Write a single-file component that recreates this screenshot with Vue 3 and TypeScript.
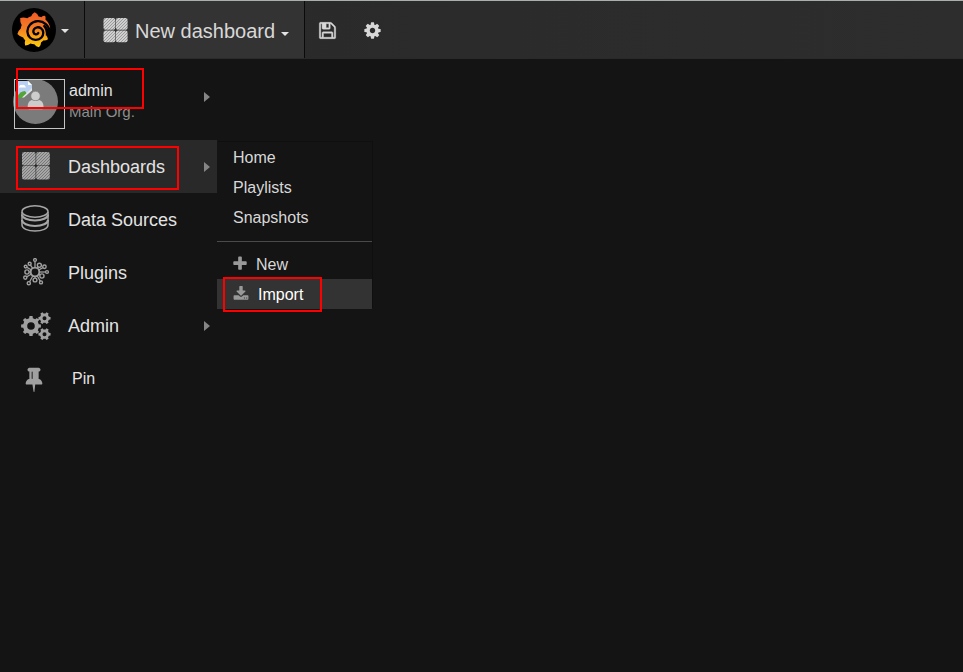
<script setup lang="ts">
interface MenuItem {
  label: string
  icon: 'dashboards' | 'database' | 'plugins' | 'cogs'
  open?: boolean
  arrow?: boolean
}

const menu: MenuItem[] = [
  { label: 'Dashboards', icon: 'dashboards', open: true, arrow: true },
  { label: 'Data Sources', icon: 'database' },
  { label: 'Plugins', icon: 'plugins' },
  { label: 'Admin', icon: 'cogs', arrow: true },
]

const pages: string[] = ['Home', 'Playlists', 'Snapshots']

// Outline of a toothed wheel with a round hole, filled with the even-odd rule.
function gear(cx: number, cy: number, teeth: number, outer: number, inner: number, hole: number): string {
  const step = (Math.PI * 2) / teeth
  const points: string[] = []
  for (let i = 0; i < teeth; i++) {
    const a = i * step
    const corners: [number, number][] = [[-0.3, inner], [-0.2, outer], [0.2, outer], [0.3, inner]]
    for (const [f, r] of corners) {
      points.push(`${(cx + r * Math.cos(a + f * step)).toFixed(2)} ${(cy + r * Math.sin(a + f * step)).toFixed(2)}`)
    }
  }
  return `M${points.join('L')}ZM${cx - hole} ${cy}a${hole} ${hole} 0 1 0 ${hole * 2} 0a${hole} ${hole} 0 1 0 ${-hole * 2} 0Z`
}

const cogsPath = [
  gear(10, 15, 8, 10, 8, 3.8),
  gear(23.5, 7.2, 6, 6.2, 4.7, 2),
  gear(23.5, 23.2, 6, 6.2, 4.7, 2),
].join('')

interface Spoke { x1: number; y1: number; x2: number; y2: number; r: number }

const spokes: Spoke[] = [
  [-90, 12, 1.4], [-57, 8, 2], [-29, 10.8, 1.7], [0, 12, 1.4], [30, 8, 2.1],
  [60, 12, 1.5], [90, 8, 1.9], [119, 12.8, 1.6], [150, 11.2, 1.6], [180, 8, 2.1],
  [210, 10.8, 1.4], [237, 9.8, 1.5],
].map(([deg, len, r]) => {
  const a = (deg * Math.PI) / 180
  return {
    x1: 14 + 4 * Math.cos(a),
    y1: 14 + 4 * Math.sin(a),
    x2: 14 + len * Math.cos(a),
    y2: 14 + len * Math.sin(a),
    r,
  }
})
</script>

<template>
  <div class="page">
    <svg class="defs" width="0" height="0" aria-hidden="true">
      <defs>
        <pattern id="hatch" width="3" height="3" patternUnits="userSpaceOnUse">
          <rect width="3" height="3" fill="#a6a6a6" />
          <path d="M-1 1L1-1M0 3L3 0M2 4L4 2" stroke="#6c6c6c" stroke-width="0.8" />
        </pattern>
        <pattern id="hatch-light" width="3" height="3" patternUnits="userSpaceOnUse">
          <rect width="3" height="3" fill="#cfcfcf" />
          <path d="M-1 1L1-1M0 3L3 0M2 4L4 2" stroke="#8f8f8f" stroke-width="0.8" />
        </pattern>
        <linearGradient id="flame" x1="0" y1="0" x2="0" y2="1">
          <stop offset="0" stop-color="#f05a28" />
          <stop offset="0.45" stop-color="#f47c24" />
          <stop offset="1" stop-color="#fdd00b" />
        </linearGradient>
      </defs>
    </svg>

    <header class="navbar">
      <button class="brand" type="button" aria-label="Main menu">
        <span class="logo">
          <svg width="34" height="36" viewBox="17 12 34 36" aria-hidden="true">
            <path fill="url(#flame)" d="M34.700 12.300Q37.800 13.800 38.600 16.400Q40 16.600 41.200 17.200Q43.200 15.600 45.200 15.900Q46 17.700 45.400 19.600Q49.300 22.800 50.200 28.300L47.500 31L46 35Q47.600 36.800 48 39.200Q46 40.800 43.200 40.500Q42.400 41.600 41 42.600Q41.200 45.200 39 47.300Q36 46.600 34.300 44.200Q31.900 44.200 30.600 43.600Q28.400 45.600 25.200 45.400Q24.400 42.800 25.200 40.300Q23.800 38.800 23.200 37.400Q19.800 36.800 17.400 34Q18.200 30.800 20.800 28.600Q21 26.600 21.700 25Q19.800 21.800 20.200 18Q23.600 16.700 27.200 18.200Q29.200 16.800 31.200 16.300Q32 13.800 34.700 12.300Z" />
            <path fill="none" stroke="#000" stroke-width="2.300" stroke-linecap="round" d="M50 33C49.400 25.500 43.500 20.800 37.600 21.200C31 21.600 27.200 26.800 27.400 31.600C27.600 36.800 31.600 40 35.800 39.800C40.600 39.600 43.600 36.200 43.200 32.200C42.800 29 40 26.900 37.200 27.300C34.400 27.700 32.900 30.200 33.500 32.400C34.100 34.600 37.300 35.200 38.300 33" />
            <path d="M44.500 24.500Q49 28 49 33.500L45.800 35.500Q46.200 29.500 42.800 26Z" />
          </svg>
        </span>
        <svg class="caret" width="8" height="5" viewBox="0 0 8 5" aria-hidden="true"><path d="M0 0h8L4 4z" /></svg>
      </button>

      <button class="title" type="button">
        <svg width="25" height="25" viewBox="0 0 25 25" fill="url(#hatch-light)" aria-hidden="true">
          <rect x="0.500" width="11.800" height="11.800" rx="2" /><rect x="12.800" width="11.800" height="11.800" rx="2" />
          <rect x="0.500" y="12.400" width="11.800" height="11.800" rx="2" /><rect x="12.800" y="12.400" width="11.800" height="11.800" rx="2" />
        </svg>
        <span class="title-text">New dashboard</span>
        <svg class="caret title-caret" width="8" height="5" viewBox="0 0 8 5" aria-hidden="true"><path d="M0 0h8L4 4z" /></svg>
      </button>

      <div class="tools">
        <button type="button" aria-label="Save dashboard">
          <svg width="19" height="19" viewBox="0 0 1792 1792" aria-hidden="true"><path stroke="#d8d8d8" stroke-width="40" d="M512 1536h768v-384h-768v384zm896 0h128v-896q0-14-10-38.5t-20-34.5l-281-281q-10-10-34-20t-39-10v416q0 40-28 68t-68 28h-576q-40 0-68-28t-28-68v-416h-128v1280h128v-416q0-40 28-68t68-28h832q40 0 68 28t28 68v416zm-384-928v-320q0-13-9.5-22.5t-22.5-9.5h-192q-13 0-22.5 9.5t-9.5 22.5v320q0 13 9.5 22.5t22.5 9.5h192q13 0 22.5-9.5t9.5-22.5zm640 32v928q0 40-28 68t-68 28h-1344q-40 0-68-28t-28-68v-1344q0-40 28-68t68-28h928q40 0 88 20t76 48l280 280q28 28 48 76t20 88z" /></svg>
        </button>
        <button type="button" aria-label="Settings">
          <svg width="19" height="19" viewBox="0 0 1792 1792" aria-hidden="true"><path d="M1152 896q0-106-75-181t-181-75-181 75-75 181 75 181 181 75 181-75 75-181zm512-109v222q0 12-8 23t-20 13l-185 28q-19 54-39 91 35 50 107 138 10 12 10 25t-9 23q-27 37-99 108t-94 71q-12 0-26-9l-138-108q-44 23-91 38-16 136-29 186-7 28-36 28h-222q-14 0-24.5-8.5t-11.5-21.5l-28-184q-49-16-90-37l-141 107q-10 9-25 9-14 0-25-11-126-114-165-168-7-10-7-23 0-12 8-23 15-21 51-66.5t54-70.5q-27-50-41-99l-183-27q-13-2-21-12.5t-8-23.5v-222q0-12 8-23t19-13l186-28q14-46 39-92-40-57-107-138-10-12-10-24 0-10 9-23 26-36 98.5-107.5t94.5-71.5q13 0 26 10l138 107q44-23 91-38 16-136 29-186 7-28 36-28h222q14 0 24.5 8.5t11.5 21.5l28 184q49 16 90 37l142-107q9-9 24-9 13 0 25 10 129 119 165 170 7 8 7 22 0 12-8 23-15 21-51 66.5t-54 70.5q26 50 41 98l183 28q13 2 21 12.5t8 23.5z" /></svg>
        </button>
      </div>
    </header>

    <nav class="sidemenu">
      <a class="profile" href="#">
        <svg class="avatar" width="52" height="50" viewBox="0 0 52 50" aria-hidden="true">
          <circle cx="22.500" cy="22.500" r="22.500" fill="#7b7b7b" />
          <path d="M4 2h11l4 4v5l-9 7H4z" fill="#b9d0f0" />
          <path d="M6 8q1-3 3-2q3-1 4 2.500H6z" fill="#fff" />
          <path d="M4 18q3-6 8-6l2 3l-4 4H4z" fill="#54a33c" />
          <path d="M15 2l4 4h-4z" fill="#fff" />
          <path d="M19 9v2.500l-8 7h-2z" fill="#e4e4e4" />
          <circle cx="22.500" cy="17" r="4.700" fill="#cdcdcd" stroke="#7b7b7b" stroke-width="0.600" />
          <path d="M14.700 29q-.5-6.500 4-8q4 2.200 7.600 0q4.700 1.500 4.200 8q-.1 1.200-1.500 1.200H16.200q-1.400 0-1.500-1.200z" fill="#cdcdcd" />
          <rect x="1.500" y="0.500" width="50" height="49" fill="none" stroke="#c4c4c4" />
        </svg>
        <span class="who">
          <span class="user">admin</span>
          <span class="org">Main Org.</span>
        </span>
        <svg class="arrow" width="6" height="10" viewBox="0 0 6 10" aria-hidden="true"><path d="M0 0l6 5l-6 5z" /></svg>
        <span class="mark mark-profile"></span>
      </a>

      <ul class="items">
        <li v-for="item in menu" :key="item.label" class="item" :class="{ open: item.open }">
          <a class="link" href="#">
            <span class="icon">
              <svg v-if="item.icon === 'dashboards'" width="30" height="30" viewBox="0 0 30 30" fill="url(#hatch)" aria-hidden="true">
                <rect x="1" y="0" width="13.600" height="13.400" rx="2" /><rect x="15.200" y="0" width="13.600" height="13.400" rx="2" />
                <rect x="1" y="14" width="13.600" height="13.600" rx="2" /><rect x="15.200" y="14" width="13.600" height="13.600" rx="2" />
              </svg>
              <svg v-else-if="item.icon === 'database'" width="30" height="30" viewBox="0 0 30 30" fill="none" stroke="#a6a6a6" stroke-width="1.500" aria-hidden="true">
                <ellipse cx="14" cy="6.500" rx="13" ry="5.700" />
                <path d="M1 7v13c0 3.500 5.800 6 13 6s13-2.500 13-6V7" />
                <path d="M1 9.500c0 3.500 5.800 6 13 6s13-2.500 13-6M1 15c0 3.500 5.800 6 13 6s13-2.500 13-6" stroke-width="2.200" />
              </svg>
              <svg v-else-if="item.icon === 'plugins'" width="30" height="30" viewBox="0 0 30 30" fill="none" stroke="#a0a0a0" aria-hidden="true">
                <circle cx="14" cy="14" r="4.300" stroke-width="1.800" />
                <template v-for="(s, i) in spokes" :key="i">
                  <line :x1="s.x1" :y1="s.y1" :x2="s.x2" :y2="s.y2" stroke-width="1.300" />
                  <circle :cx="s.x2" :cy="s.y2" :r="s.r" fill="#141414" stroke-width="1.400" />
                </template>
              </svg>
              <svg v-else width="30" height="30" viewBox="0 0 30 30" fill="#a0a0a0" fill-rule="evenodd" aria-hidden="true">
                <path :d="cogsPath" />
              </svg>
            </span>
            <span class="label">{{ item.label }}</span>
            <svg v-if="item.arrow" class="arrow" width="6" height="10" viewBox="0 0 6 10" aria-hidden="true"><path d="M0 0l6 5l-6 5z" /></svg>
            <span v-if="item.open" class="mark mark-dashboards"></span>
          </a>

          <ul v-if="item.open" class="submenu">
            <li v-for="page in pages" :key="page"><a href="#">{{ page }}</a></li>
            <li class="divider" role="separator"></li>
            <li>
              <a href="#">
                <svg width="16" height="16" viewBox="160 80 1680 1680" aria-hidden="true"><path d="M1600 736v192q0 40-28 68t-68 28h-416v416q0 40-28 68t-68 28h-192q-40 0-68-28t-28-68v-416h-416q-40 0-68-28t-28-68v-192q0-40 28-68t68-28h416v-416q0-40 28-68t68-28h192q40 0 68 28t28 68v416h416q40 0 68 28t28 68z" /></svg>
                <span class="new-text">New</span>
              </a>
            </li>
            <li>
              <a class="current" href="#">
                <svg width="16" height="16" viewBox="0 0 1792 1792" aria-hidden="true"><path d="M1344 1344q0-26-19-45t-45-19-45 19-19 45 19 45 45 19 45-19 19-45zm256 0q0-26-19-45t-45-19-45 19-19 45 19 45 45 19 45-19 19-45zm128-224v320q0 40-28 68t-68 28h-1472q-40 0-68-28t-28-68v-320q0-40 28-68t68-28h465l135 136q58 56 136 56t136-56l136-136h464q40 0 68 28t28 68zm-325-569q17 41-14 70l-448 448q-18 19-45 19t-45-19l-448-448q-31-29-14-70 17-39 59-39h256v-448q0-26 19-45t45-19h256q26 0 45 19t19 45v448h256q42 0 59 39z" /></svg>
                <span>Import</span>
                <span class="mark mark-import"></span>
              </a>
            </li>
          </ul>
        </li>
        <li class="item">
          <a class="link" href="#">
            <span class="icon">
              <svg width="26" height="26" viewBox="0 0 1792 1792" fill="#a0a0a0" aria-hidden="true"><path d="M800 864v-448q0-14-9-23t-23-9-23 9-9 23v448q0 14 9 23t23 9 23-9 9-23zm672 352q0 26-19 45t-45 19h-429l-51 483q-2 12-10.500 20.500t-20.500 8.500h-1q-27 0-32-27l-76-485h-404q-26 0-45-19t-19-45q0-123 78.500-221.500t177.500-98.500v-512q-52 0-90-38t-38-90 38-90 90-38h640q52 0 90 38t38 90-38 90-90 38v512q99 0 177.500 98.500t78.500 221.500z" /></svg>
            </span>
            <span class="label pin">Pin</span>
          </a>
        </li>
      </ul>
    </nav>
  </div>
</template>

<style>
body {
  margin: 0;
  background: #141414;
}
</style>

<style scoped>
.page {
  min-height: 100vh;
  background: #141414;
  color: #e3e3e3;
  font-family: "Liberation Sans", Arial, sans-serif;
  font-size: 16px;
}
.defs {
  position: absolute;
}
a {
  color: inherit;
  text-decoration: none;
}
button {
  padding: 0;
  border: 0;
  background: none;
  color: inherit;
  font: inherit;
  cursor: pointer;
}
ul {
  margin: 0;
  padding: 0;
  list-style: none;
}
svg {
  display: block;
  flex: none;
}
.navbar {
  display: flex;
  height: 57px;
  border-top: 1px solid #a9afad;
  border-bottom: 1px solid #2a2a2a;
  background: linear-gradient(90deg, #292929, #2d2d2d);
}
.brand {
  display: flex;
  align-items: center;
  gap: 5px;
  width: 84px;
  padding-left: 12px;
  background: #333;
}
.logo {
  display: grid;
  place-items: center;
  width: 44px;
  height: 44px;
  border-radius: 50%;
  background: #000;
}
.caret {
  margin-top: 3px;
  fill: #e3e3e3;
}
.title {
  display: flex;
  align-items: center;
  padding: 2px 15px 0 18px;
  border-right: 1px solid #0a0a0a;
  border-left: 1px solid #0a0a0a;
  background: #333;
}
.title-text {
  padding: 2px 6px 0 7px;
  color: #d8d8d8;
  font-size: 20px;
}
.title-caret {
  margin-top: 8px;
}
.tools {
  display: flex;
  align-items: center;
  gap: 26px;
  padding: 2px 0 0 13px;
  fill: #d8d8d8;
}
.sidemenu {
  width: 217px;
}
.profile {
  position: relative;
  display: flex;
  align-items: flex-start;
  height: 61px;
  padding: 20px 0 0 13px;
}
.who {
  display: flex;
  flex: 1;
  flex-direction: column;
  gap: 3px;
  padding: 3px 0 0 4px;
  line-height: 18px;
}
.org {
  color: #8e8e8e;
  font-size: 15px;
}
.arrow {
  margin-right: 7px;
  fill: #858585;
}
.profile .arrow {
  margin-top: 13px;
}
.item {
  position: relative;
}
.link {
  position: relative;
  display: flex;
  align-items: center;
  height: 53px;
  padding-left: 21px;
  font-size: 18px;
}
.open > .link {
  background: #292929;
}
.icon {
  width: 47px;
}
.label {
  flex: 1;
  padding-top: 2px;
}
.pin {
  padding: 0 0 0 4px;
  font-size: 16px;
}
.submenu {
  position: absolute;
  top: 2px;
  left: 100%;
  width: 155px;
  box-shadow: 1px -1px 0 #0f0f0f;
  background: #141414;
}
.submenu a {
  position: relative;
  display: flex;
  box-sizing: border-box;
  align-items: center;
  gap: 9px;
  height: 30px;
  padding: 2px 0 0 16px;
  color: #d8d8d8;
}
.submenu svg {
  margin-top: -2px;
  fill: #999;
}
.submenu .current {
  background: #333;
  color: #fff;
}
.new-text {
  margin-left: -2px;
}
.divider {
  height: 1px;
  margin: 9px 0 7px;
  background: #4a4a4a;
}
.mark {
  position: absolute;
  box-sizing: border-box;
  border: 2px solid #f00;
  pointer-events: none;
}
.mark-profile {
  top: 9px;
  left: 16px;
  width: 128px;
  height: 41px;
}
.mark-dashboards {
  top: 6px;
  left: 16px;
  width: 163px;
  height: 44px;
}
.mark-import {
  top: -2px;
  left: 6px;
  width: 99px;
  height: 35px;
}
</style>
